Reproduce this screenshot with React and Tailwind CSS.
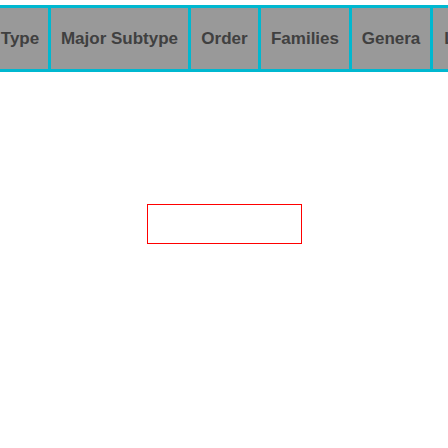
import React from "react";

/* ── Column header cells ── */
const columns = [
  { label: "Type", width: "w-[61px] pl-[2px]" },
  { label: "Major Subtype", width: "w-[140px]" },
  { label: "Order", width: "w-[70px]" },
  { label: "Families", width: "w-[91px]" },
  { label: "Genera", width: "w-[81px]" },
  { label: "Lineages", width: "w-[99px]" },
];

const HeaderCell = ({ label, width }) => (
  <div
    className={`${width} shrink-0 h-[61px] flex items-center justify-center bg-[#999999] border-r-[3px] border-[#00b8d0] text-[17px] font-bold text-[#404040] whitespace-nowrap overflow-hidden`}
  >
    {label}
  </div>
);

/* ── Main Component ── */
export default function App() {
  return (
    <div
      className="w-[448px] h-[448px] bg-white overflow-hidden pt-[5px]"
      style={{ fontFamily: '"Liberation Sans", Arial, sans-serif' }}
    >
      <div className="flex ml-[-10px] w-max border-y-[3px] border-[#00b8d0]">
        {columns.map((c) => (
          <HeaderCell key={c.label} label={c.label} width={c.width} />
        ))}
      </div>

      <div className="flex justify-center mt-[132px]">
        <div className="w-[155px] h-[40px] border border-[#ff0000] bg-white" />
      </div>
    </div>
  );
}
